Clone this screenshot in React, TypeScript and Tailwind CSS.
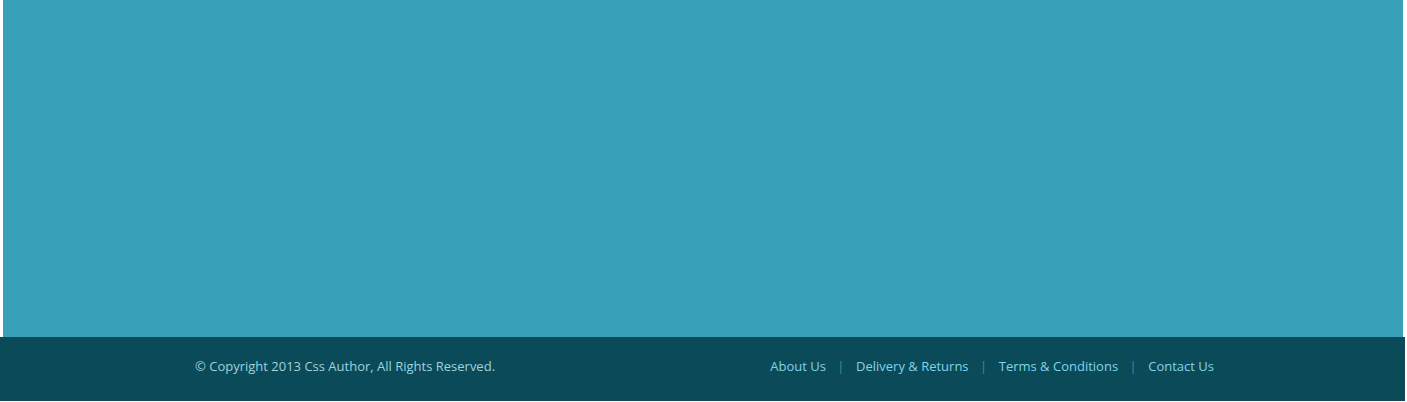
export default function App() {
  const links = ["About Us", "Delivery & Returns", "Terms & Conditions", "Contact Us"];

  return (
    <div className="w-[1405px] bg-white font-['Open_Sans',sans-serif]">
      {/* Hero block */}
      <div className="ml-[3px] mr-[2px] h-[337px] bg-[#38a1b9]" />

      {/* Footer */}
      <footer className="h-[64px] bg-[#0b4a58]">
        <div className="ml-[195px] flex w-[1019px] items-center justify-between pt-[20px] text-[13px] leading-[18px]">
          <p className="text-[#9fd3df]">© Copyright 2013 Css Author, All Rights Reserved.</p>
          <ul className="flex items-center">
            {links.map((link, i) => (
              <li key={link} className="flex items-center">
                {i > 0 && <span className="mx-[11.5px] text-[#3f8ea0]">|</span>}
                <a href="#" className="text-[#80d4ec]">
                  {link}
                </a>
              </li>
            ))}
          </ul>
        </div>
      </footer>
    </div>
  );
}
